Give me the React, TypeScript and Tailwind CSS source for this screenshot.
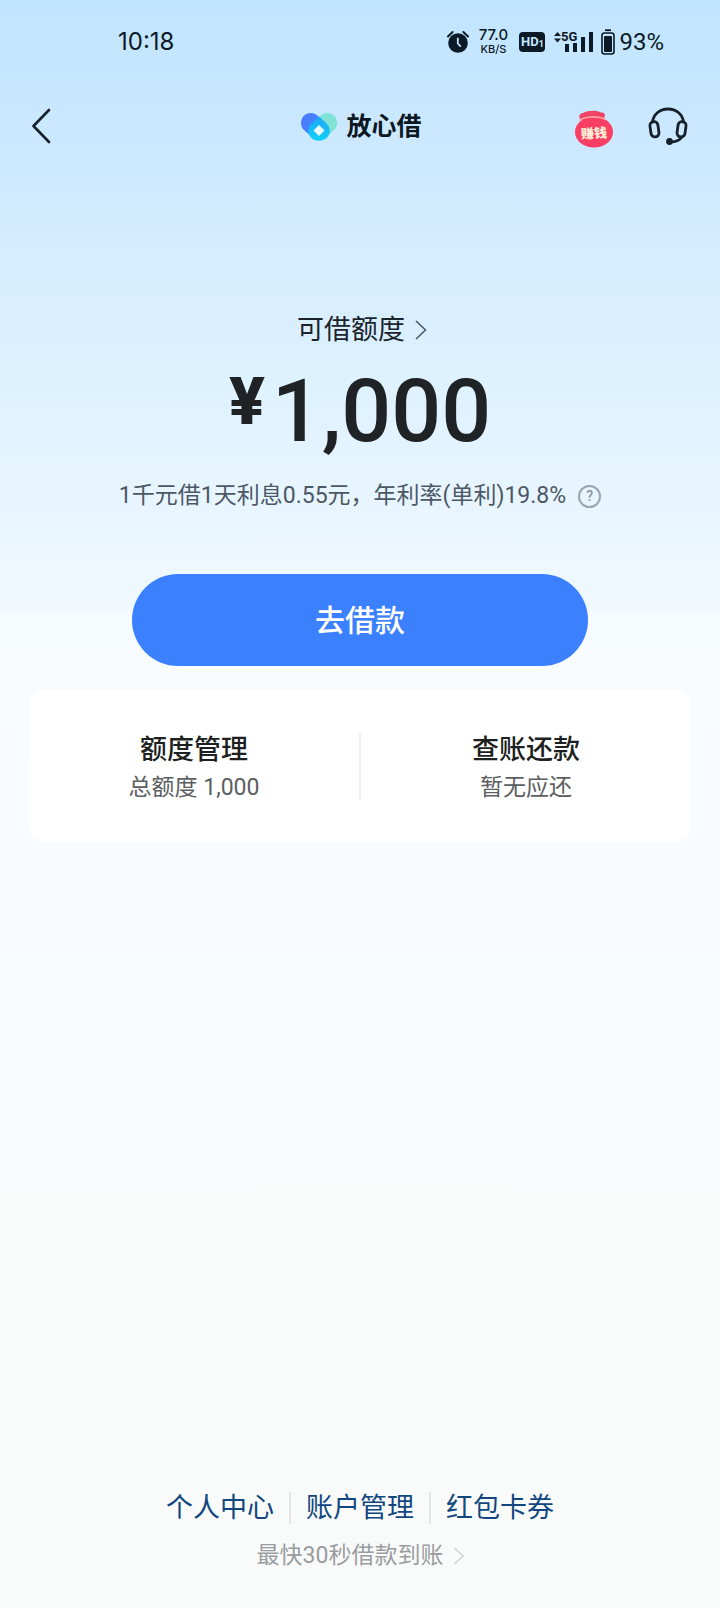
import type { ReactNode } from 'react'

const entries = [
  { title: '额度管理', desc: '总额度 1,000' },
  { title: '查账还款', desc: '暂无应还' },
]

const links = ['个人中心', '账户管理', '红包卡券']

function Chevron({ className }: { className?: string }) {
  return (
    <svg viewBox="0 0 12 20" fill="none" stroke="currentColor" strokeWidth="1.6" className={className} aria-hidden="true">
      <path d="M1 1l9.5 9L1 19" />
    </svg>
  )
}

function StatusBar() {
  return (
    <div className="flex h-21 items-center justify-between pr-14 pl-[118px] font-['Inter','Noto_Sans_CJK_SC',sans-serif] text-[#0b1a26]">
      <span className="text-2xl">10:18</span>
      <div className="flex items-center">
        {/* alarm */}
        <svg width="22" height="24" viewBox="0 0 22 24" fill="none" aria-hidden="true">
          <circle cx="11" cy="13" r="9.8" fill="currentColor" />
          <path d="M1 6.5L5.6 2M21 6.5L16.4 2" stroke="currentColor" strokeWidth="2" strokeLinecap="round" />
          <path d="M10.8 8.5v5l2.5 2.6" stroke="#c5e6ff" strokeWidth="1.8" strokeLinecap="round" />
        </svg>
        <div className="ml-2 flex w-8 flex-col items-center font-medium">
          <span className="text-[15px] leading-[14px]">77.0</span>
          <span className="text-[11px] leading-[14px]">KB/S</span>
        </div>
        <div className="ml-2.5 flex h-5 w-[26px] items-center justify-center rounded bg-[#0b1a26] font-['Roboto',sans-serif] font-bold text-[#c5e6ff]">
          <span className="text-[13px] leading-5">HD</span>
          <span className="pt-1 text-[9px] leading-4">1</span>
        </div>
        {/* mobile signal */}
        <svg width="40" height="24" viewBox="0 0 40 24" fill="currentColor" className="ml-2" aria-hidden="true">
          <path d="M1 6L4.5 2L8 6ZM1 8.5L4.5 12.5L8 8.5Z" />
          <text x="8" y="11" fontSize="13" fontWeight="700" fontFamily="Roboto, sans-serif">5G</text>
          <path d="M12 14h4v8h-4zM20 13h4v9h-4zM28 7h4v15h-4zM36 2h4v20h-4z" />
        </svg>
        {/* battery */}
        <svg width="14" height="26" viewBox="0 0 14 26" fill="none" className="ml-2" aria-hidden="true">
          <path d="M4 1.2h6" stroke="currentColor" strokeWidth="1.8" />
          <rect x="1" y="4" width="12" height="21" rx="2.5" stroke="currentColor" strokeWidth="1.6" />
          <rect x="3" y="7" width="8" height="16" rx="1" fill="currentColor" />
        </svg>
        <span className="ml-1 font-['Roboto',sans-serif] text-2xl">93%</span>
      </div>
    </div>
  )
}

function Header() {
  return (
    <header className="grid h-21 grid-cols-[1fr_auto_1fr] items-center px-8">
      <button aria-label="返回" className="justify-self-start">
        <svg width="19" height="36" viewBox="0 0 19 36" fill="none" stroke="#15202a" strokeWidth="2.6" strokeLinecap="round" strokeLinejoin="round">
          <path d="M17 2L1.5 18L17 34" />
        </svg>
      </button>
      <h1 className="flex items-center gap-2 pt-0.5 pl-0.5 text-[25px] leading-9 font-bold text-[#0c1722]">
        <svg width="38" height="30" viewBox="0 0 38 30" aria-hidden="true">
          <defs>
            <linearGradient id="leaf" x1="0" y1="0" x2="1" y2="1">
              <stop offset="0" stopColor="#4a7bff" />
              <stop offset="1" stopColor="#3f86ff" />
            </linearGradient>
            <linearGradient id="drop" x1="0" y1="0" x2="0" y2="1">
              <stop offset="0" stopColor="#1fa5f5" />
              <stop offset="1" stopColor="#0fd0fa" />
            </linearGradient>
          </defs>
          <path d="M37 11C37 5 32.5 1 27.5 1C24 1 21.5 2.5 19 5L14 20L26 26L34 18C36 16 37 14 37 11Z" fill="#7fe3d6" />
          <path d="M1 11C1 5 5.5 1 10.5 1C14 1 16.5 2.5 19 5L29 15L15 28L4 18C2 16 1 14 1 11Z" fill="url(#leaf)" />
          <path d="M19 4.5L26.5 11.5C31 16 30.5 21.5 27.5 25C23.5 30 14.5 30 10.5 25C7.5 21.5 7 16 11.5 11.5Z" fill="url(#drop)" />
          <path d="M19 13.5L24 18.5L19 23.5L14 18.5Z" fill="#e9faff" stroke="#e9faff" strokeLinejoin="round" />
        </svg>
        放心借
      </h1>
      <div className="flex items-center gap-[34px] justify-self-end">
        <button aria-label="赚钱">
          <svg width="40" height="44" viewBox="0 -6 40 44" aria-hidden="true">
            <path d="M7 10C4 7 5 3.5 9 3C13 0.5 23 0 27 2.5C31 2 32.5 6 29 9Z" fill="#ee4567" />
            <ellipse cx="20" cy="22" rx="19" ry="15.5" fill="#fb3e63" />
            <path d="M5 10.5C10 6.5 25 5.5 32 9.5" fill="none" stroke="#ffb3a8" strokeWidth="1.5" />
            <text x="20" y="28" textAnchor="middle" fontSize="13" fontWeight="900" fill="#fff0d8" fontFamily="'Noto Sans CJK SC', sans-serif" transform="rotate(-3 20 22)">赚钱</text>
          </svg>
        </button>
        <button aria-label="客服">
          <svg width="40" height="38" viewBox="0 0 40 38" fill="none" stroke="#15202a" strokeWidth="2.8" strokeLinecap="round" aria-hidden="true">
            <path d="M4.5 15C5.5 7 12 2 20 2C28 2 34.5 7 35.5 15" />
            <rect x="2.5" y="14.5" width="8" height="15.5" rx="4" transform="rotate(-8 6.5 22.5)" />
            <rect x="29.5" y="14.5" width="8" height="15.5" rx="4" transform="rotate(8 33.5 22.5)" />
            <path d="M34 30C31.5 33.5 28 35 22 35" />
            <circle cx="21.5" cy="34.5" r="2" fill="#15202a" />
          </svg>
        </button>
      </div>
    </header>
  )
}

function FooterLink({ children }: { children: ReactNode }) {
  return (
    <a href="#" className="px-[15px] text-[27px] leading-8 text-[#11467f]">
      {children}
    </a>
  )
}

export default function App() {
  return (
    <div className="flex min-h-screen flex-col bg-[linear-gradient(180deg,#c1e4ff_0%,#cde9ff_10%,#ddf1ff_23%,#f1f9ff_38%,#f6fcff_38%,#f8fcff_42%,#f8fbff_57%,#f9fcfd_66%,#f9fbfa_80%,#f9fbfb_100%)] font-['Roboto','Noto_Sans_CJK_SC',sans-serif]">
      <StatusBar />
      <Header />

      <main className="flex flex-col items-center px-[29px] pt-[146px]">
        <button className="flex items-center gap-2.5 pl-1 text-[27px] leading-8 text-[#1b242c]">
          可借额度
          <Chevron className="h-5 w-3 text-[#4c5a68]" />
        </button>

        <div className="mt-5 flex items-start font-medium text-[#202325]">
          <span className="mr-1.5 font-['Inter',sans-serif] text-[64px] leading-[70px] font-extrabold">¥</span>
          <span className="text-[88px] leading-[90px]">1,000</span>
        </div>

        <div className="mt-6 flex items-center gap-3 text-[23px] leading-8 text-[#4c5865]">
          <p>1千元借1天利息0.55元，年利率(单利)19.8%</p>
          <button aria-label="利率说明" className="flex size-[23px] items-center justify-center rounded-full border-2 border-[#9aa5ae] text-sm leading-5 font-medium text-[#87929c]">
            ?
          </button>
        </div>

        <button className="mt-[62px] h-[92px] w-[69%] rounded-full bg-[#3a80ff] text-[30px] font-medium text-white">去借款</button>

        <section className="mt-6 flex w-full items-center rounded-2xl bg-white py-[42px]">
          {entries.map((e, i) => (
            <button key={e.title} className={`flex flex-1 flex-col items-center gap-2 ${i > 0 ? 'border-l-2 border-[#f0f1f2]' : ''}`}>
              <span className="text-[27px] leading-9 font-medium text-[#1d1f21]">{e.title}</span>
              <span className="text-[23px] leading-6 text-[#5b5e61]">{e.desc}</span>
            </button>
          ))}
        </section>
      </main>

      <footer className="mt-auto flex flex-col items-center gap-4 pb-9">
        <nav className="flex divide-x-2 divide-[#e4e7e9]">
          {links.map((l) => (
            <FooterLink key={l}>{l}</FooterLink>
          ))}
        </nav>
        <button className="flex items-center gap-2.5 pl-0.5 text-[23px] leading-8 text-[#9a9d9f]">
          最快30秒借款到账
          <Chevron className="h-[18px] w-3 text-[#cdd1d3]" />
        </button>
      </footer>
    </div>
  )
}
